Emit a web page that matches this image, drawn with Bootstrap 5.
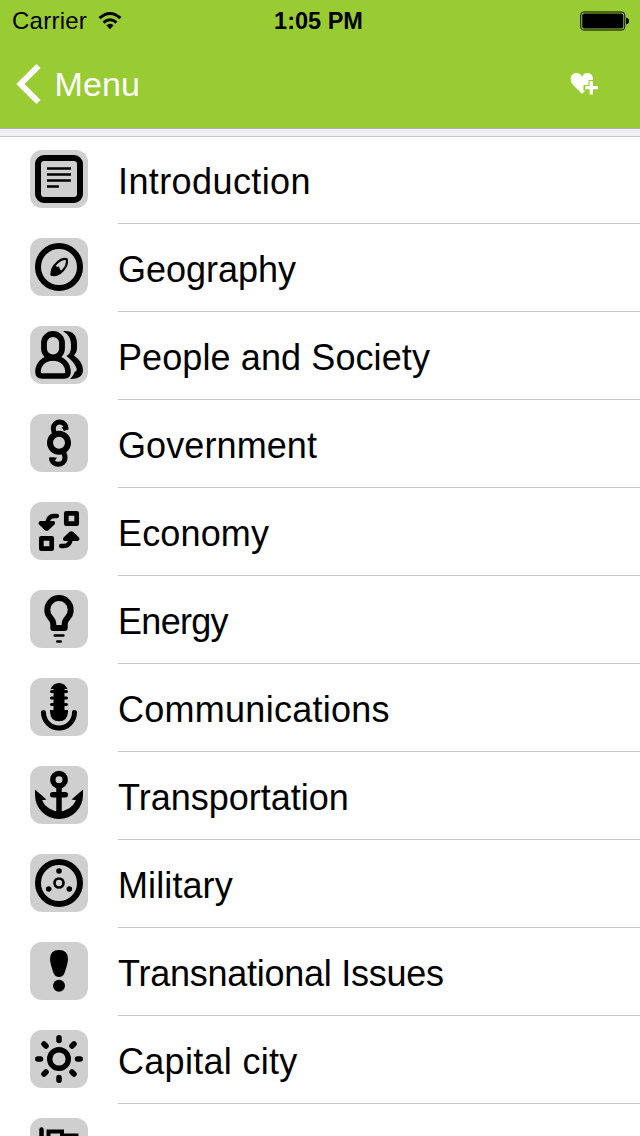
<!DOCTYPE html>
<html lang="en">
<head>
<meta charset="utf-8">
<meta name="viewport" content="width=device-width, initial-scale=1">
<title>Menu</title>
<link href="https://cdn.jsdelivr.net/npm/bootstrap@5.3.0/dist/css/bootstrap.min.css" rel="stylesheet">
<style>
html,body{height:100%}
body{font-family:"Liberation Sans",Arial,sans-serif;color:#000;background:#fff;overflow:hidden}
svg{display:block;flex:none}
.app-head{background:#9c3;height:128px}
.status-row{height:40px;font-size:24px;line-height:40px;padding:1px 11px 0 12px}
.status-row>div{flex:1 1 0}
.status-row>.clock{font-weight:700;font-size:23.5px;letter-spacing:0;padding-right:4px}
.carrier{letter-spacing:.25px}
.title-row{height:88px;padding:0 42px 0 16px}
.back-link{color:#fff;font-size:34px;line-height:88px;letter-spacing:.1px;gap:12.500px}
.band{height:8px;background:#efeff4;border-top:1px solid #b2b2b2}
.topics{box-shadow:inset 0 1px #c8c7cc}
.topic{height:88px;padding-left:30px;gap:30px}
.tile{width:58px;height:58px;margin-top:14px;border-radius:12px;background:#cfcfcf;fill:none;stroke:#000;stroke-width:6;stroke-linecap:round;stroke-linejoin:round}
.tile .solid{fill:#000;stroke:none}
.topic-name{font-size:36px;line-height:88px;height:88px;padding-top:2px;border-bottom:1px solid #c8c7cc;white-space:nowrap}
.topic:nth-child(1) .topic-name{letter-spacing:.4px}
.topic:nth-child(3) .topic-name{letter-spacing:.1px}
.topic:nth-child(4) .topic-name{letter-spacing:.1px}
.topic:nth-child(5) .topic-name{letter-spacing:.15px}
.topic:nth-child(6) .topic-name{letter-spacing:-.7px}
.topic:nth-child(7) .topic-name{letter-spacing:.27px}
.topic:nth-child(9) .topic-name{letter-spacing:.1px}
.topic:nth-child(10) .topic-name{letter-spacing:-.25px}
.topic:nth-child(11) .topic-name{letter-spacing:.3px}
</style>
</head>
<body>
<header class="app-head">
  <div class="status-row d-flex">
    <div class="d-flex align-items-center gap-2">
      <span class="carrier">Carrier</span>
      <svg width="28" height="20" viewBox="0 0 28 20" fill="none" stroke="#000" stroke-width="3"><path d="M4.500 7.200Q15-2.200 25.500 7.200M8.500 11.600Q15 5.800 21.500 11.600"/><path d="M11.300 14.300Q15 11.200 18.700 14.300L15 18.200Z" fill="#000" stroke="none"/></svg>
    </div>
    <div class="clock text-center">1:05 PM</div>
    <div class="d-flex justify-content-end align-items-center">
      <svg width="49" height="20" viewBox="0 0 49 20"><rect x=".75" y="1" width="44" height="18" rx="3" fill="none" stroke="#000"/><rect x="2.300" y="2.500" width="41" height="15" rx="2"/><path d="M46 6.500q3 .8 3 3.500t-3 3.500z"/></svg>
    </div>
  </div>
  <div class="title-row d-flex justify-content-between align-items-center">
    <a class="back-link d-flex align-items-center text-decoration-none" href="#">
      <svg width="26" height="42" viewBox="0 0 26 42" fill="none" stroke="#fff" stroke-width="6"><path d="M22.500 3L4.500 21L22.500 39"/></svg>
      <span>Menu</span>
    </a>
    <svg width="28" height="24" viewBox="0 0 28 24"><path fill="#fff" d="M12 22L2.800 12.500C-1.500 7 1.500 1 6 1Q10.500 1 12 4.800Q13.500 1 17.500 1C22.500 1 25 7 21.200 12.500Z"/><path d="M21.300 8V23.500M13.500 15.700H28" fill="none" stroke="#9c3" stroke-width="5.500"/><path d="M21.300 9V22.500M15.300 15.700H28" fill="none" stroke="#fff" stroke-width="3.300"/></svg>
  </div>
</header>
<div class="band"></div>
<main class="topics">
  <div class="topic d-flex"><svg class="tile" viewBox="0 0 58 58"><rect x="8" y="8" width="42" height="42" rx="6"/><path stroke-width="2.500" stroke-linecap="butt" d="M17 18.500H41M17 24.500H41M17 30.500H41M17 36.500H29"/></svg><div class="topic-name flex-grow-1">Introduction</div></div>
  <div class="topic d-flex"><svg class="tile" viewBox="0 0 58 58"><circle cx="29" cy="29" r="21"/><path stroke-width="2.200" d="M36.800 21.200C31 19.500 21 28 21.500 36.800C29 39 38.500 29 36.800 21.200Z"/><path class="solid" d="M24 26.500Q27 30 29 28.500Q29.500 32 32.500 33Q27 38 21 37.800Q20 32 24 26.500Z"/></svg><div class="topic-name flex-grow-1">Geography</div></div>
  <div class="topic d-flex"><svg class="tile" viewBox="0 0 58 58"><rect x="14" y="8" width="18" height="23.500" rx="9" stroke-width="5.800"/><path stroke-width="5.600" d="M23 32C33 32 38 39 38 46Q38 50 34 50H12Q8 50 8 46C8 39 13 32 23 32Z"/><path class="solid" d="M33 5Q47 4 47 18V23Q47 26 44 29.500Q53 36 53 44Q53 53 40 53Q44 49 44.500 46Q48 45 46 41Q44 36 36.500 30Q41 27 41 22V18Q41 10 33 5Z"/></svg><div class="topic-name flex-grow-1">People and Society</div></div>
  <div class="topic d-flex"><svg class="tile" viewBox="0 0 58 58"><circle cx="29" cy="28.700" r="9"/><path stroke-width="5" stroke-linecap="butt" d="M36.200 15.500C36.500 6 23.500 5.500 23.300 14.500Q23.300 18 26 21M21.500 43.500C21.500 52.500 35 52.500 35 43.500Q35 39.500 32 37"/><path class="solid" d="M31.500 13H38V15.500L34 17ZM20 43.500H27L25 46.500L20 46Z"/></svg><div class="topic-name flex-grow-1">Government</div></div>
  <div class="topic d-flex"><svg class="tile" viewBox="0 0 58 58"><g stroke-width="4.700"><rect x="36.300" y="11.300" width="10.400" height="10.400"/><rect x="11.300" y="36.300" width="10.400" height="10.400"/><path stroke-width="4.300" d="M27 14H24Q18 14 17 22M31 44H34Q40 44 41 36"/></g><path class="solid" d="M10.500 19H23.500Q26 20 24.500 22.500L18.500 28.200Q16.800 29.500 15 28.200L9 22.500Q7.500 20 10.500 19ZM47.500 39H34.500Q32 38 33.500 35.500L39.500 29.800Q41.200 28.500 43 29.800L49 35.500Q50.500 38 47.500 39Z"/></svg><div class="topic-name flex-grow-1">Economy</div></div>
  <div class="topic d-flex"><svg class="tile" viewBox="0 0 58 58"><path stroke-width="6" d="M23.300 38V34Q23.300 31 20.200 27.500A11.700 11.700 0 1 1 37.800 27.500Q34.700 31 34.700 34V38Z"/><path stroke-width="2.700" d="M24.800 45.500H33.300M27.300 51.500H30.700"/></svg><div class="topic-name flex-grow-1">Energy</div></div>
  <div class="topic d-flex"><svg class="tile" viewBox="0 0 58 58"><path class="solid" d="M20.500 11Q23 5 29 5T37.500 11ZM20 32H38V34Q37.500 43.300 29 43.300T20 34ZM23.500 10H34.500V34H23.500Z"/><path stroke-width="3" d="M21.500 13.500H36.500M21.500 20H36.500M21.500 26.500H36.500"/><path stroke-width="5" d="M13.500 34.500A15.500 15.500 0 0 0 44.500 34.500"/></svg><div class="topic-name flex-grow-1">Communications</div></div>
  <div class="topic d-flex"><svg class="tile" viewBox="0 0 58 58"><circle cx="29" cy="13.700" r="6.200" stroke-width="5.500"/><path stroke-width="5.500" d="M29 20V49M22.700 28.700H35.300"/><path class="solid" d="M5 23.500L16.500 33.500L12 34.200A18.500 18.500 0 0 0 46 34.200L41.500 33.500L53 23.500V29A24 24 0 0 1 5 29Z"/></svg><div class="topic-name flex-grow-1">Transportation</div></div>
  <div class="topic d-flex"><svg class="tile" viewBox="0 0 58 58"><circle cx="29" cy="29" r="21"/><circle cx="29" cy="29" r="4.500" stroke-width="2.700"/><g class="solid"><circle cx="29" cy="17" r="2.800"/><circle cx="18.700" cy="35" r="2.800"/><circle cx="39.300" cy="35" r="2.800"/></g></svg><div class="topic-name flex-grow-1">Military</div></div>
  <div class="topic d-flex"><svg class="tile" viewBox="0 0 58 58"><path class="solid" d="M29 8Q38 8 38 17Q38 21 34.500 31Q33 35 29 35T23.500 31Q20 21 20 17Q20 8 29 8Z"/><circle class="solid" cx="29" cy="43.800" r="6"/></svg><div class="topic-name flex-grow-1">Transnational Issues</div></div>
  <div class="topic d-flex"><svg class="tile" viewBox="0 0 58 58"><circle cx="29" cy="29" r="9.300" stroke-width="5.400"/><path stroke-width="5.500" d="M29 7.800V10.500M29 47.500V50.200M7.800 29H10.500M47.500 29H50.200M14 14L16 16M42 42L44 44M44 14L42 16M16 42L14 44"/></svg><div class="topic-name flex-grow-1">Capital city</div></div>
  <div class="topic d-flex"><svg class="tile" viewBox="0 0 58 58"><path stroke-width="4.500" d="M11.500 11.500V48"/><path stroke-width="4" stroke-linecap="butt" stroke-linejoin="miter" d="M18.500 32V13.500H32V32M32 17.500H48.500M14 34H49V48"/></svg><div class="topic-name flex-grow-1"></div></div>
</main>
<script src="https://cdn.jsdelivr.net/npm/bootstrap@5.3.0/dist/js/bootstrap.bundle.min.js"></script>
</body>
</html>
